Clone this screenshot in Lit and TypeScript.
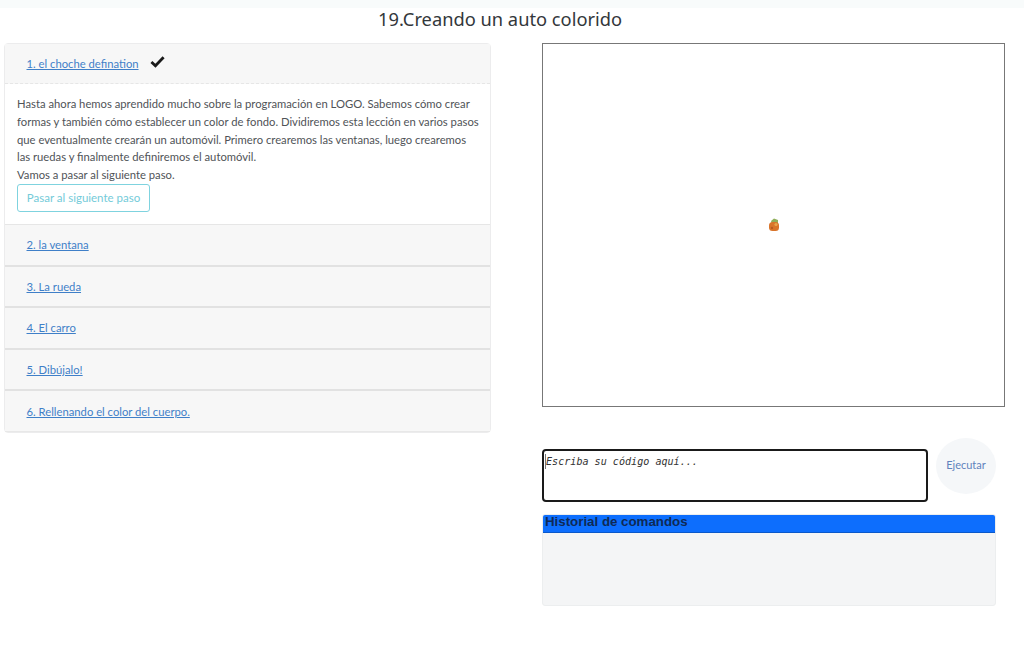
import { LitElement, html, css } from "lit";
import { customElement } from "lit/decorators.js";

const steps = ["2. la ventana", "3. La rueda", "4. El carro", "5. Dibújalo!", "6. Rellenando el color del cuerpo."];

@customElement("app-root")
export class AppRoot extends LitElement {
  static styles = css`
    :host { display: block; height: 661px; background: #fff; font-family: Lato, "Noto Sans", sans-serif; overflow: hidden; color: #212529; }
    .strip { height: 8px; background: #f8fbfb; }
    h1 { margin: 0; height: 35px; width: 1000px; text-align: center; font: 400 18.3px/22px "Noto Sans", sans-serif; color: #33373b; }
    .main { display: flex; align-items: flex-start; padding-left: 4px; gap: 51px; }
    .accordion { width: 487px; border: 1px solid #ececed; border-radius: 4px; box-sizing: border-box; }
    .head { box-sizing: border-box; height: 41.6px; padding: 0 21.5px; display: flex; align-items: center; gap: 11px; background: #f7f7f7; border-bottom: 2px solid #e2e2e2; font-size: 11.25px; }
    .head:last-child { border-bottom: 1px solid #e8e8e8; height: 40.6px; }
    .head.first { height: 40px; padding-bottom: 1px; border-bottom: 1px dashed #e6e6e6; }
    a { color: #3f7fc8; text-decoration: underline; }
    .body { box-sizing: border-box; height: 141px; padding: 11px 10px 0 12px; font-size: 11.25px; line-height: 17.8px; color: #4f5357; border-bottom: 1px solid #e6e6e6; }
    .next { display: block; margin-top: 0; box-sizing: border-box; width: 133px; height: 28px; padding: 0; background: #fff; border: 1px solid #7fd3df; border-radius: 3px; color: #74cbd9; font: 11.5px Lato, sans-serif; }
    .check { width: 15px; height: 13px; margin-top: -3px; }
    .right { width: 463px; }
    .canvas { box-sizing: border-box; height: 364px; border: 1px solid #777; display: flex; align-items: center; justify-content: center; }
    .turtle { width: 12px; height: 14px; }
    .editor { display: flex; align-items: flex-start; gap: 8px; margin-top: 31px; }
    .field { position: relative; margin-top: 11px; }
    .code { box-sizing: border-box; width: 386px; height: 53px; border: 2px solid #1a1a1a; border-radius: 4px; padding: 4px 2px; font: italic 10.1px/13px "DejaVu Sans Mono", monospace; color: #333; resize: none; outline: none; display: block; }
    .code::placeholder { color: #333; opacity: 1; }
    .caret { position: absolute; left: 3px; top: 5px; width: 1px; height: 15px; background: #777; }
    .run { width: 60px; height: 56px; padding: 0 0 3px; border: 0; border-radius: 50%; background: #f5f7f9; color: #5f83bd; font: 11px Lato, sans-serif; flex: none; }
    .history { width: 454px; margin-top: 12px; height: 92px; background: #f4f5f6; border-radius: 3px; border: 1px solid #eceeef; box-sizing: border-box; overflow: hidden; }
    .history h2 { margin: -1px -1px 0; height: 19px; padding-left: 3px; background: #0d6efd; border-bottom: 1px solid #0a58ca; box-sizing: border-box; font: 700 13.3px/16px "Liberation Sans", sans-serif; color: #0f2a55; }
  `;
  render() {
    return html`
      <div class="strip"></div>
      <h1>19.Creando un auto colorido</h1>
      <div class="main">
        <div class="accordion">
          <div class="head first">
            <a href="#">1. el choche defination</a>
            <svg class="check" viewBox="0 0 16 13"><path d="M1.5 7 L5.8 11 L14.5 2" fill="none" stroke="#1a1a1a" stroke-width="3"/></svg>
          </div>
          <div class="body">
            Hasta ahora hemos aprendido mucho sobre la programación en LOGO. Sabemos cómo crear
            formas y también cómo establecer un color de fondo. Dividiremos esta lección en varios pasos
            que eventualmente crearán un automóvil. Primero crearemos las ventanas, luego crearemos
            las ruedas y finalmente definiremos el automóvil.<br />
            Vamos a pasar al siguiente paso.
            <button class="next">Pasar al siguiente paso</button>
          </div>
          ${steps.map((s) => html`<div class="head"><a href="#">${s}</a></div>`)}
        </div>
        <div class="right">
          <div class="canvas">
            <svg class="turtle" viewBox="0 0 12 14">
              <path d="M3 3 L6 0.5 L10 2 L10 6 L4 6 Z" fill="#8fae5a"/>
              <rect x="1" y="4" width="10" height="9" rx="3.5" fill="#d9742a"/>
              <circle cx="8" cy="6.5" r="1.6" fill="#e8a64a"/>
              <circle cx="4" cy="10" r="1.2" fill="#b85a20"/>
            </svg>
          </div>
          <div class="editor">
            <div class="field">
              <textarea class="code" placeholder="Escriba su código aquí..."></textarea>
              <span class="caret"></span>
            </div>
            <button class="run">Ejecutar</button>
          </div>
          <div class="history"><h2>Historial de comandos</h2></div>
        </div>
      </div>
    `;
  }
}
